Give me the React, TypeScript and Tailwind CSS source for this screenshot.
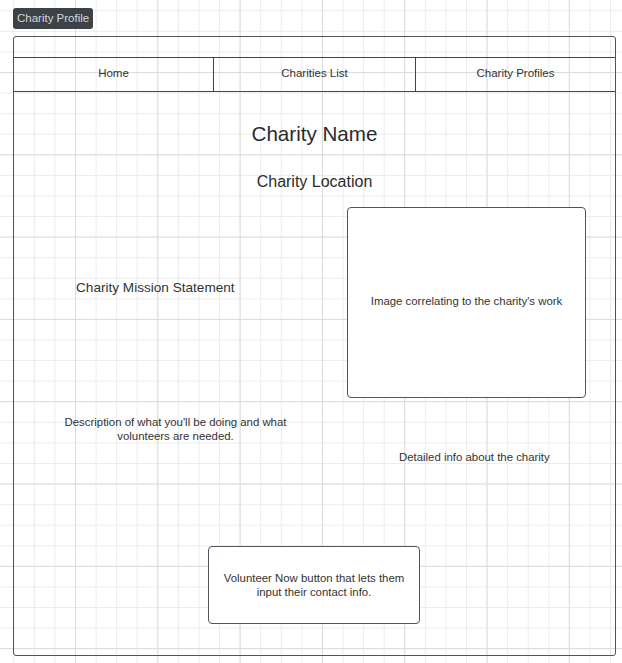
const navLinks = ['Home', 'Charities List', 'Charity Profiles'];

const App = () => {
  return (
    <div
      className="w-[622px] h-[663px] overflow-hidden bg-white pt-[8px] pl-[13px] text-[#333333] font-['Liberation_Sans',Arial,sans-serif]
        bg-[image:linear-gradient(to_right,#dcdcdc_1px,transparent_1px),linear-gradient(to_bottom,#dcdcdc_1px,transparent_1px),linear-gradient(to_right,#ececec_1px,transparent_1px),linear-gradient(to_bottom,#ececec_1px,transparent_1px)]
        bg-[size:82.3px_82.3px,82.3px_82.3px,20.58px_20.58px,20.58px_20.58px]
        bg-[position:75px_72px]"
    >
      {/* page tab label */}
      <div className="w-fit h-[21px] px-[4px] rounded-[3px] bg-[#3d4148] text-[#d6d6d6] text-[11.5px] leading-[21px]">
        Charity Profile
      </div>

      {/* wireframe */}
      <div className="mt-[7px] w-[603px] h-[620px] border border-[#50545c] rounded-[3px] flex flex-col">
        <div className="h-[20px]" />

        <div className="flex h-[35px] border-y border-[#3f434a] text-[11.5px]">
          {navLinks.map((name, i) => (
            <div
              key={name}
              className={`flex items-center justify-center pb-[2px] ${
                i === 0 ? 'w-[200px] border-r border-[#3f434a]' : i === 1 ? 'w-[202px] border-r border-[#3f434a]' : 'flex-1'
              }`}
            >
              {name}
            </div>
          ))}
        </div>

        <h1 className="mt-[30px] text-center text-[20.6px] leading-[24px] text-[#2b2b2b]">Charity Name</h1>
        <h2 className="mt-[26px] text-center text-[16px] leading-[20px] text-[#2b2b2b]">Charity Location</h2>

        <div className="mt-[15px] flex">
          <div className="w-[333px]">
            <p className="mt-[73px] pl-[62px] text-[13.6px] leading-[16px]">Charity Mission Statement</p>
            <p className="mt-[119px] ml-[44px] w-[235px] text-center text-[11.4px] leading-[14px]">
              Description of what you'll be doing and what volunteers are needed.
            </p>
          </div>

          <div>
            <div className="w-[239px] h-[191px] pb-[2px] border border-[#50545c] rounded-[4px] bg-white flex items-center justify-center text-[11.4px]">
              Image correlating to the charity's work
            </div>
            <p className="mt-[52px] pl-[52px] text-[11.4px] leading-[14px]">Detailed info about the charity</p>
          </div>
        </div>

        <div className="mt-[82px] ml-[194px] w-[212px] h-[78px] border border-[#50545c] rounded-[4px] bg-white flex items-center justify-center text-center text-[11.4px] leading-[14px] px-2">
          Volunteer Now button that lets them input their contact info.
        </div>
      </div>
    </div>
  );
};

export default App;
